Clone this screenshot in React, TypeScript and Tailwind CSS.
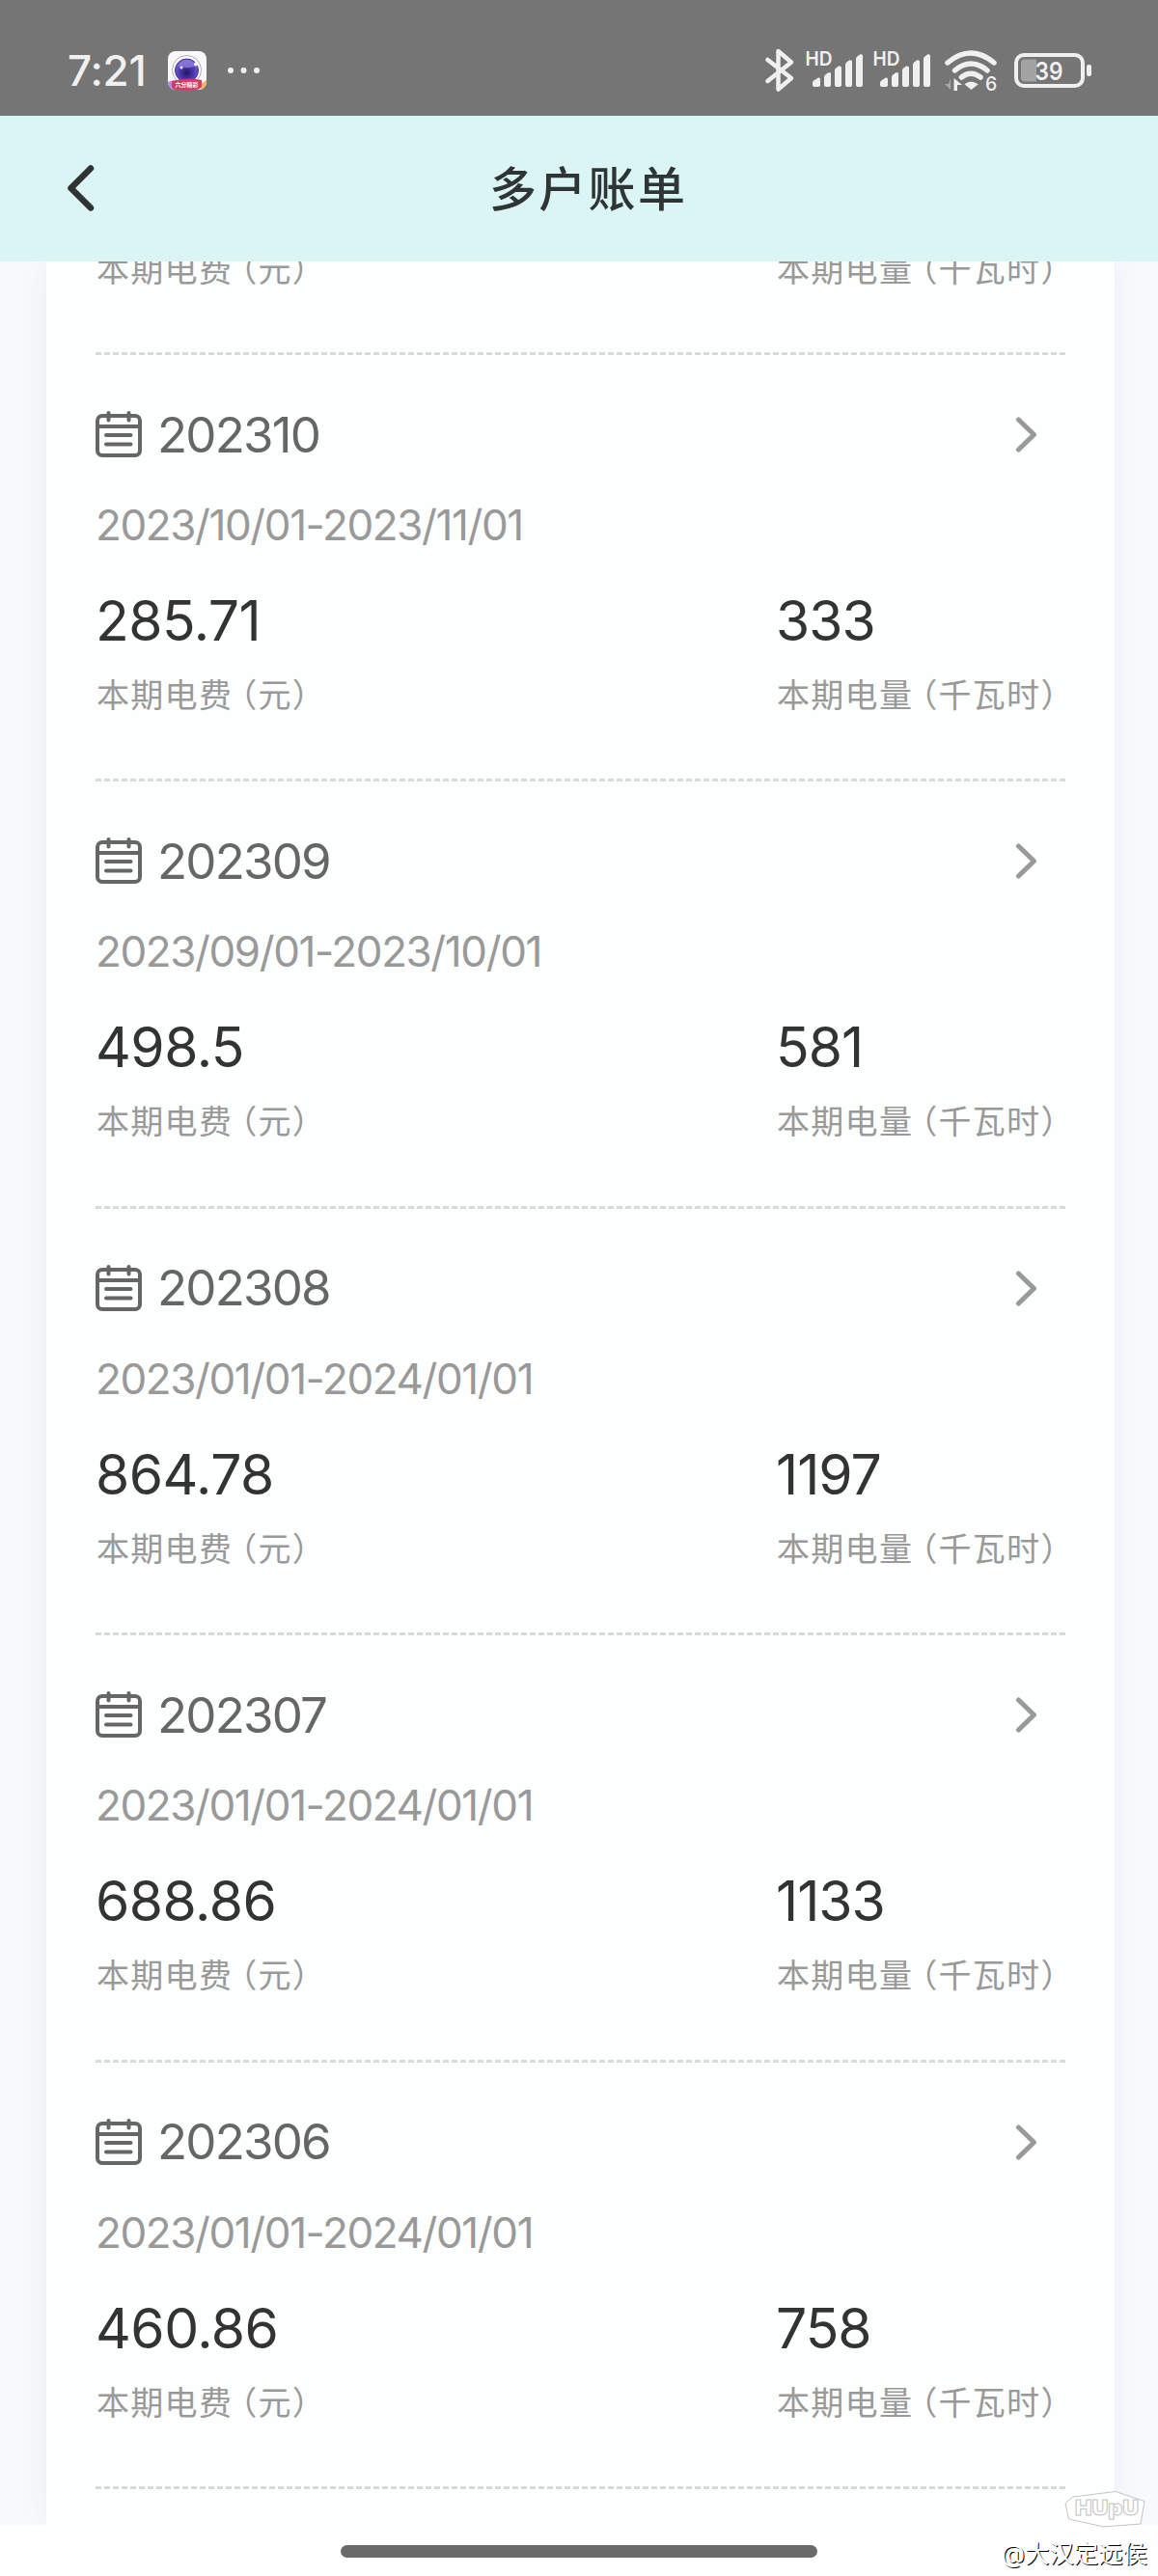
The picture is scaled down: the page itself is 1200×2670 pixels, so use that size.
interface Bill {
  month: string;
  range: string;
  fee: string;
  usage: string;
}

const bills: Bill[] = [
  { month: "202310", range: "2023/10/01-2023/11/01", fee: "285.71", usage: "333" },
  { month: "202309", range: "2023/09/01-2023/10/01", fee: "498.5", usage: "581" },
  { month: "202308", range: "2023/01/01-2024/01/01", fee: "864.78", usage: "1197" },
  { month: "202307", range: "2023/01/01-2024/01/01", fee: "688.86", usage: "1133" },
  { month: "202306", range: "2023/01/01-2024/01/01", fee: "460.86", usage: "758" },
];

const AppBadge = () => (
  <svg className="ml-[23px] h-10 w-10" viewBox="0 0 40 40">
    <defs>
      <clipPath id="badge">
        <rect width="40" height="40" rx="8" />
      </clipPath>
      <radialGradient id="lens" cx="0.5" cy="0.6" r="0.6">
        <stop offset="0" stopColor="#231a5e" />
        <stop offset="0.5" stopColor="#4a35b0" />
        <stop offset="1" stopColor="#8a6fd8" />
      </radialGradient>
    </defs>
    <g clipPath="url(#badge)">
      <rect width="40" height="40" fill="#fbf8fb" />
      <path d="M0 32 Q8 28 14 34 L10 40 H0Z" fill="#b58adf" />
      <path d="M40 30 L34 34 L34 40 H40Z" fill="#f2b56a" />
      <circle cx="19.5" cy="19.5" r="15" fill="#fff" stroke="#a9a6c4" strokeWidth="1" />
      <circle cx="19.5" cy="20" r="12" fill="url(#lens)" stroke="#3b2a86" strokeWidth="1" />
      <path d="M10 15 Q19 4 29 14 Q22 20 10 15Z" fill="#8f7ad9" opacity="0.8" />
      <circle cx="29" cy="13.500" r="2" fill="#fff" />
      <circle cx="14" cy="17" r="1.500" fill="#f0e9ff" />
      <path d="M4 31 Q20 27 35 30 V36 Q34 40 28 40 H9 Q4 40 4 36Z" fill="#d63a62" />
      <text x="19.500" y="37" textAnchor="middle" fontSize="6" fontWeight="700" fill="#fff" fontFamily="Noto Sans CJK SC, sans-serif">
        六分精彩
      </text>
    </g>
  </svg>
);

const Signal = () => (
  <svg className="h-12 w-[60px] overflow-visible" viewBox="0 0 60 48" fill="#f0f0f0">
    <text x="-0.500" y="19" fontSize="19.500" fontWeight="600" textLength="28" lengthAdjust="spacingAndGlyphs" fontFamily="Inter, sans-serif">
      HD
    </text>
    <path d="M7 37 Q7 35 9 34 L13 31.500 Q15 31 15 33 V39 Q15 41 13 41 H9 Q7 41 7 39Z" />
    <path d="M19 31 Q19 29 21 28 L23 26.500 Q26 25 26 27.500 V39 Q26 41 24 41 H21 Q19 41 19 39Z" />
    <path d="M30 24 Q30 22 32 21 L34 19.500 Q37 19 37 21 V39 Q37 41 35 41 H32 Q30 41 30 39Z" />
    <path d="M41 18 Q41 16 43 15 L45 13.500 Q48 12.500 48 15 V39 Q48 41 46 41 H43 Q41 41 41 39Z" />
    <path d="M52 12 Q52 10 54 9 L56 7.500 Q59 6.500 59 9 V39 Q59 41 57 41 H54 Q52 41 52 39Z" />
  </svg>
);

const StatusBar = () => (
  <div className="flex h-[120px] shrink-0 bg-[#757575] pt-[49px] pl-[70px] text-[#f0f0f0]">
    <div className="w-[81px] whitespace-nowrap text-[44px] leading-[48px] font-medium tracking-[-0.200px]">7:21</div>
    <div className="pt-1">
      <AppBadge />
    </div>
    <svg className="ml-[20px] h-12 w-[36px]" viewBox="0 0 36 48" fill="#f0f0f0">
      <circle cx="5" cy="24" r="3" />
      <circle cx="18.500" cy="24" r="3" />
      <circle cx="32" cy="24" r="3" />
    </svg>
    <div className="ml-[522px] flex">
      <svg className="h-12 w-8" viewBox="0 0 32 48" fill="none" stroke="#f0f0f0" strokeWidth="4.500" strokeLinecap="round" strokeLinejoin="round">
        <path d="M3.500 13 L28 32 L14.500 43.500 V4 L28 15.500 L3.500 35" />
      </svg>
      <div className="ml-[11px]">
        <Signal />
      </div>
      <div className="ml-[10px]">
        <Signal />
      </div>
      <svg className="ml-[13px] h-12 w-[58px]" viewBox="0 0 58 48" fill="none" stroke="#f0f0f0" strokeWidth="5.500" strokeLinecap="round">
        <path d="M4 16 Q28 -4 52 16" />
        <path d="M11.500 24 Q28 10 45 24" />
        <path d="M18.500 31 Q28 23.500 38 31" />
        <path d="M24 38.500 Q28 36 33 38.500 L28.500 42 Z" strokeWidth="3" fill="#f0f0f0" />
        <path d="M7 32 V44 L1 38 H5" stroke="none" fill="#a8a8a8" />
        <path d="M10.500 45 V32 L19 39 H14 V45Z" stroke="none" fill="#f0f0f0" />
        <text x="43" y="45" fontSize="19.500" fontWeight="500" fill="#f0f0f0" stroke="none" fontFamily="Inter, sans-serif" textLength="11">
          6
        </text>
      </svg>
      <svg className="ml-[14px] h-12 w-[84px]" viewBox="0 0 84 48">
        <rect x="3" y="8" width="69" height="32" rx="8" fill="none" stroke="#f0f0f0" strokeWidth="4" />
        <path d="M12 12.500 H24 V35.500 H12 Q8 35.500 8 31.500 V16.500 Q8 12.500 12 12.500Z" fill="#a3a3a3" />
        <rect x="76" y="18" width="5" height="12" rx="2" fill="#f0f0f0" />
        <text x="37" y="33.500" fontSize="26" fontWeight="600" textAnchor="middle" textLength="29" lengthAdjust="spacingAndGlyphs" fill="#f0f0f0" fontFamily="Inter, sans-serif">
          39
        </text>
      </svg>
    </div>
  </div>
);

const Header = () => (
  <div className="flex h-[151px] shrink-0 items-center bg-[#dbf5f5] pl-[66px]">
    <svg className="h-[54px] w-[36px]" viewBox="0 0 36 54" fill="none" stroke="#2f3333" strokeWidth="6.500" strokeLinecap="round" strokeLinejoin="round">
      <path d="M28 5.500 L7.500 26 L28 46.500" />
    </svg>
    <h1 className="ml-[405px] pt-0.5 text-[49px] leading-[60px] font-medium tracking-[2.300px] text-[#2f3535]">多户账单</h1>
  </div>
);

const Label = ({ name, unit }: { name: string; unit: string }) => (
  <div className="h-[50px] whitespace-nowrap pl-px text-[34px] leading-[50px] tracking-[1.300px] text-[#999]">
    {name}
    {/* half-width opening bracket, so the gap before the unit stays tight */}
    <span className="ml-2 [font-feature-settings:'halt']">（</span>
    {unit}）
  </div>
);

const Labels = () => (
  <div className="flex">
    <div className="w-[705px] shrink-0">
      <Label name="本期电费" unit="元" />
    </div>
    <Label name="本期电量" unit="千瓦时" />
  </div>
);

const BillItem = ({ bill }: { bill: Bill }) => (
  <div className="h-[442.400px] shrink-0 border-b-3 border-dashed border-[#dadada] pt-[54px]">
    <div className="flex h-14 items-center">
      <svg className="h-[50px] w-[50px]" viewBox="0 0 50 50" fill="none" stroke="#666" strokeWidth="4" strokeLinecap="round">
        <rect x="2" y="6" width="44" height="41" rx="5" />
        <path d="M2 17 H46" strokeLinecap="butt" />
        <path d="M13.500 3 V10.500 M34.500 3 V10.500 M11 26 H36.500 M11 35.500 H36.500" />
      </svg>
      <span className="ml-[14px] pt-px text-[51px] leading-[56px] tracking-[-1.800px] text-[#666]">{bill.month}</span>
      <svg className="mr-[24px] ml-auto h-10 w-[28px]" viewBox="0 0 28 40" fill="none" stroke="#999" strokeWidth="5" strokeLinecap="round" strokeLinejoin="round">
        <path d="M3.500 5 L19.500 20.500 L3.500 36" />
      </svg>
    </div>
    <div className="mt-[44px] h-11 whitespace-nowrap text-[44px] leading-[44px] tracking-[-1.400px] text-[#999]">{bill.range}</div>
    <div className="mt-[48px] flex h-[60px] text-[57px] leading-[60px] text-[#333]">
      <div className="w-[705px] tracking-[-0.500px]">{bill.fee}</div>
      <div className="tracking-[-1px]">{bill.usage}</div>
    </div>
    <div className="mt-[22px]">
      <Labels />
    </div>
  </div>
);

const HupuMark = () => (
  <svg className="absolute right-[12px] bottom-[50px] h-10 w-[86px]" viewBox="0 0 86 40" fill="#fff" stroke="#c4c4c4" strokeWidth="1">
    <path d="M2 14.500 L9.500 8 L54 2.500 L84 12.500 L80 36 L42 39 L5.500 31Z" />
    <text x="12" y="27" fontSize="22" fontWeight="900" textLength="66" lengthAdjust="spacingAndGlyphs" fontFamily="Inter, sans-serif">
      HUpU
    </text>
  </svg>
);

export default function App() {
  return (
    <div className="relative flex h-[2670px] w-[1200px] flex-col overflow-hidden bg-white font-['Inter','Noto_Sans_CJK_SC',sans-serif]">
      <StatusBar />
      <Header />
      <div className="h-[2346px] shrink-0 overflow-hidden bg-[#f8f9fc] pr-[45px] pl-12">
        <div className="flex h-full flex-col bg-[#fdfefe] pr-[51px] pl-[51px] shadow-[0_0_30px_rgba(40,40,40,0.05)]">
          <div className="h-[97px] shrink-0 border-b-3 border-dashed border-[#dadada]">
            <div className="-mt-[16px]">
              <Labels />
            </div>
          </div>
          {bills.map((bill) => (
            <BillItem key={bill.month} bill={bill} />
          ))}
          <div className="h-20 shrink-0" />
        </div>
      </div>
      <div className="flex flex-1 justify-center pt-[21px]">
        <div className="h-[13px] w-[494px] rounded-full bg-[#6a6a6a]" />
      </div>
      <HupuMark />
      <div className="absolute right-[11px] bottom-[7px] text-[25.400px] leading-[32px] whitespace-nowrap text-white [text-shadow:1px_1px_0_#000]">@大汉定远侯</div>
    </div>
  );
}
